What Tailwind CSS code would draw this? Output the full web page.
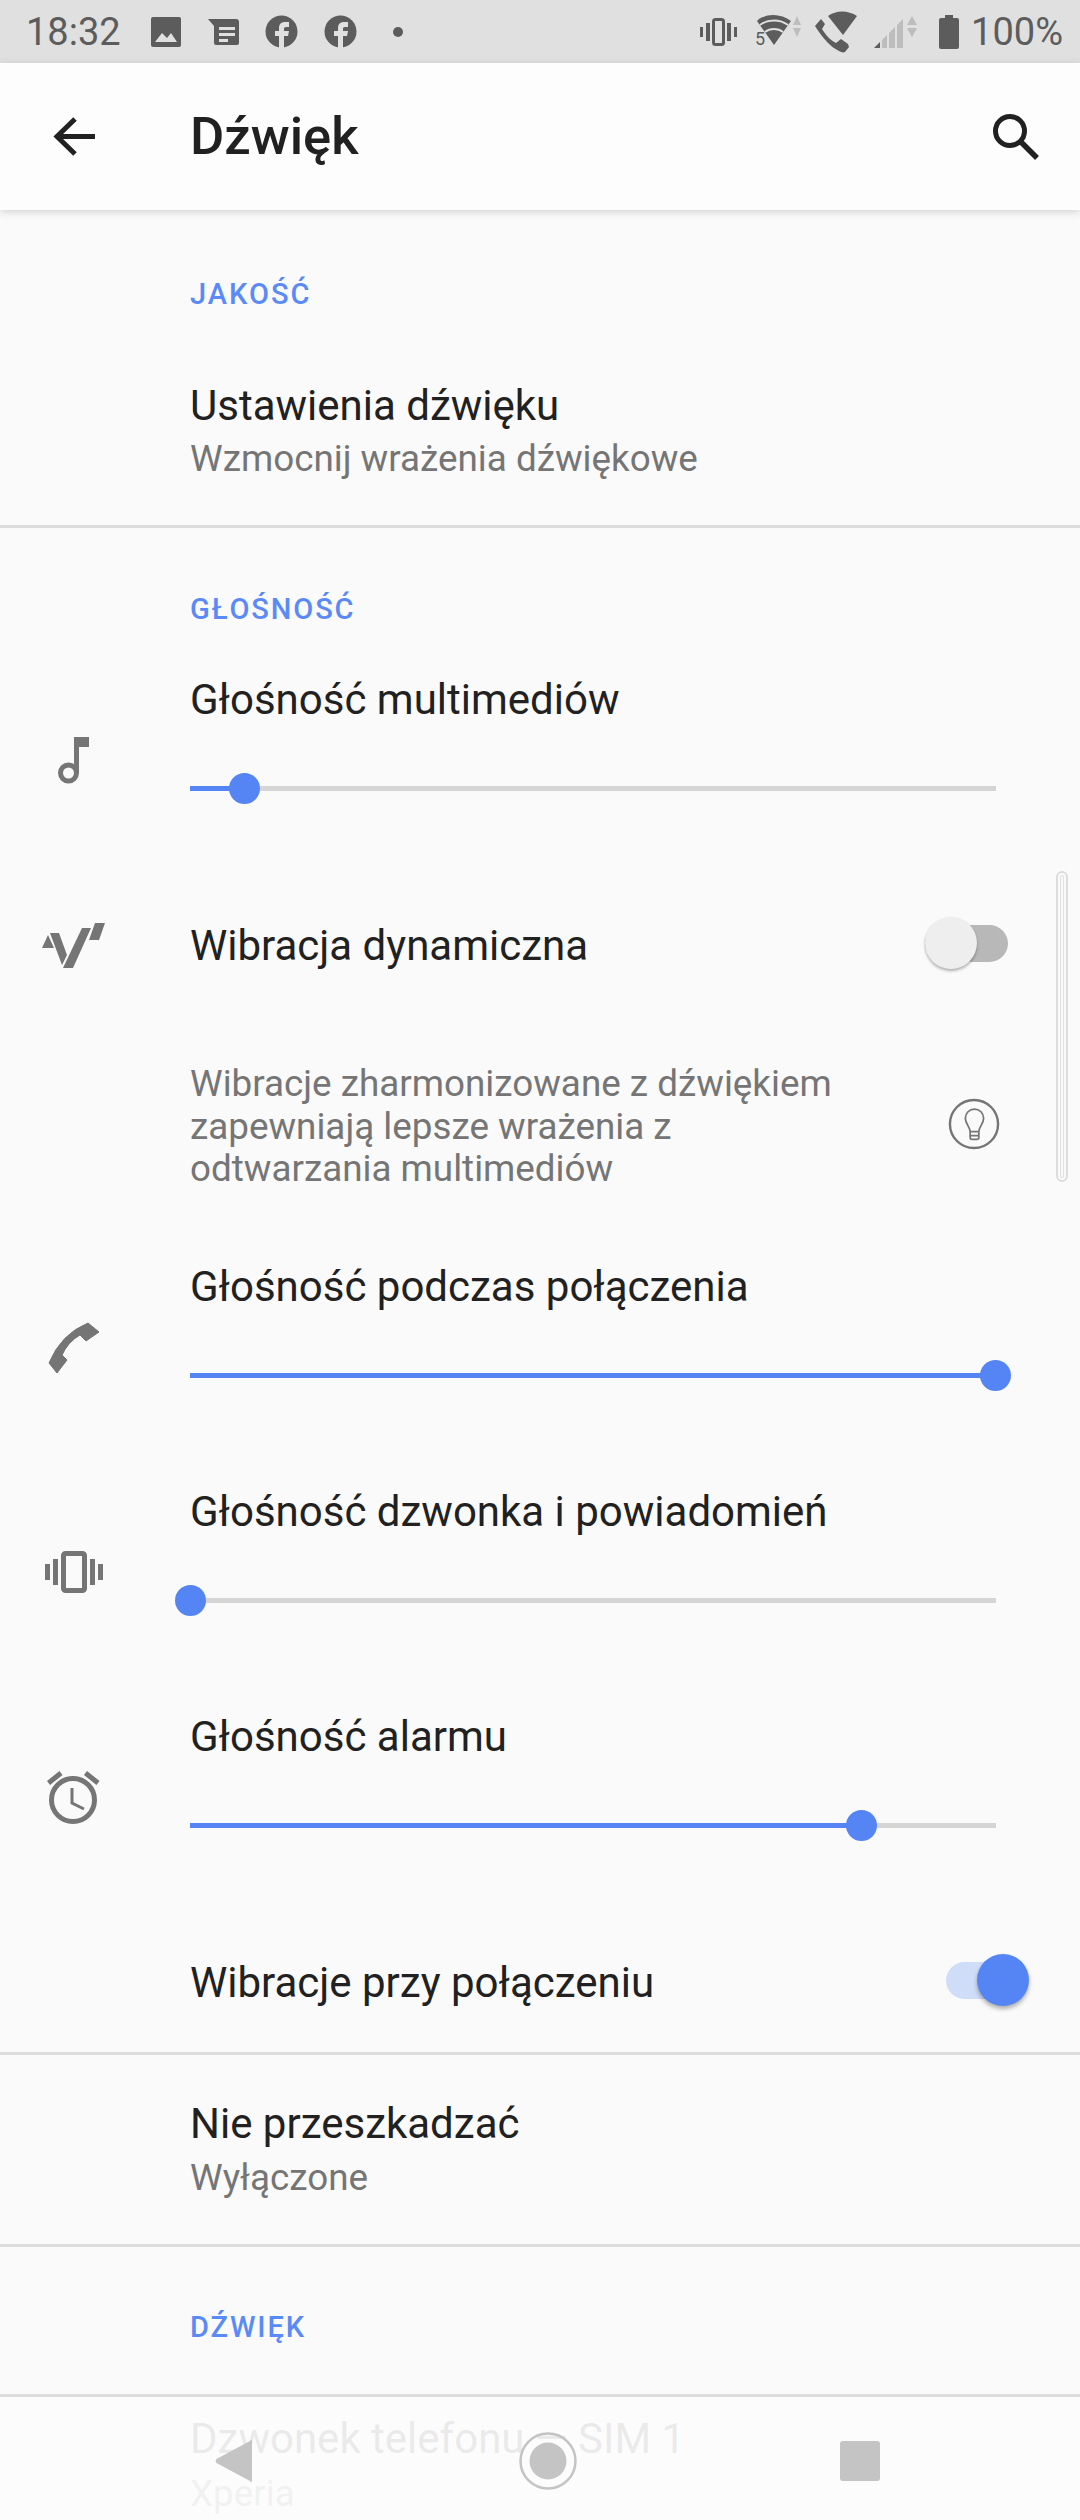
<!DOCTYPE html>
<html><head><meta charset="utf-8"><script src="https://cdn.jsdelivr.net/npm/@tailwindcss/browser@4"></script></head>
<body class="m-0">
<div class="relative w-[1080px] h-[2520px] overflow-hidden bg-[#fafafa] font-['Roboto',sans-serif] text-[#212121]">

<!-- status bar -->
<div class="h-[63px] bg-[#e0e0e0] flex items-center text-[#5c5c5c] relative">
  <span class="ml-[26px] text-[38px] leading-none w-[125px]">18:32</span>
  <svg width="30" height="30" viewBox="0 0 30 30"><rect width="30" height="30" rx="2" fill="#5c5c5c"/><path d="M4 25l7-9 5 5 4-5 6 9z" fill="#e0e0e0"/></svg>
  <svg class="ml-[27px]" width="32" height="28" viewBox="0 0 32 28"><path d="M0 1h28a3 3 0 0 1 3 3v21a2 2 0 0 1-2 2H8a2 2 0 0 1-2-2V8z" fill="#5c5c5c"/><path d="M11 9h16v3H11zM11 15h16v3H11zM11 21h9v3H11z" fill="#e0e0e0"/></svg>
  <svg class="ml-[25px]" width="33" height="33" viewBox="0 0 33 33"><circle cx="16.500" cy="16.500" r="16" fill="#5c5c5c"/><path d="M14 33V21h-4v-5h4v-3c0-4 2.500-6 6-6h4v5h-3c-1.500 0-2 .7-2 2v2h5l-1 5h-4v12z" fill="#e0e0e0"/></svg>
  <svg class="ml-[26px]" width="33" height="33" viewBox="0 0 33 33"><circle cx="16.500" cy="16.500" r="16" fill="#5c5c5c"/><path d="M14 33V21h-4v-5h4v-3c0-4 2.500-6 6-6h4v5h-3c-1.500 0-2 .7-2 2v2h5l-1 5h-4v12z" fill="#e0e0e0"/></svg>
  <span class="ml-[36px] w-[10px] h-[10px] rounded-full bg-[#5c5c5c]"></span>
  <div class="ml-auto flex items-center mr-[17px]">
    <svg width="37" height="28" viewBox="0 0 37 28"><path d="M0 9h3v10H0zM6 5h4v18H6zM27 5h4v18h-4zM34 9h3v10h-3z" fill="#5c5c5c"/><rect x="13.500" y="1.500" width="10" height="25" rx="2" fill="none" stroke="#5c5c5c" stroke-width="3"/></svg>
    <div class="relative ml-[18px] w-[48px] h-[36px]">
      <svg class="block" width="48" height="36" viewBox="0 0 48 36"><path d="M2 7C10-1 26-1 36 7L19 31z" fill="#5c5c5c"/><path d="M5 11c8-6 20-6 28 0M10 18c5-4 13-4 18 0" fill="none" stroke="#e0e0e0" stroke-width="1.800"/><path d="M42 2l4 9h-8zM42 23l4-9h-8z" fill="#bdbdbd"/></svg>
      <span class="absolute left-0 bottom-[2px] text-[18px] leading-none text-[#5c5c5c]">5</span>
    </div>
    <svg class="ml-[12px]" width="42" height="42" viewBox="0 0 42 42"><path d="M13 5c8-6 20-6 29 0L28 24z" fill="#5c5c5c"/><path d="M6 8l4 5-3 5 2 3c4 6 8 9 12 11l5-4 7 5 1 3-4 5c-2 1-4 0-6-1C16 36 9 29 0 15z" fill="#5c5c5c"/></svg>
    <svg class="ml-[17px]" width="44" height="34" viewBox="0 0 44 34"><path d="M0 33l6-6v6z" fill="#5c5c5c"/><path d="M8 25l5-5v13H8zM15 18l6-6v21h-6zM23 10l6-6v29h-6z" fill="#bdbdbd"/><path d="M38 1l5 9H33zM38 22l5-9H33z" fill="#bdbdbd"/></svg>
    <svg class="ml-[21px]" width="20" height="34" viewBox="0 0 20 34"><path d="M6 0h8v3h4a2 2 0 0 1 2 2v27a2 2 0 0 1-2 2H2a2 2 0 0 1-2-2V5a2 2 0 0 1 2-2h4z" fill="#5c5c5c"/></svg>
    <span class="ml-[12px] text-[38px] leading-none">100%</span>
  </div>
</div>

<!-- toolbar -->
<div class="h-[147px] bg-[#fdfdfd] shadow-[0_2px_8px_rgba(0,0,0,0.16)] relative z-10 flex items-center">
  <svg class="ml-[53px]" width="42" height="42" viewBox="0 0 42 42"><path d="M42 20.500H6M22 3L4 20.500 22 38" fill="none" stroke="#212121" stroke-width="5"/></svg>
  <span class="ml-[95px] text-[52.500px] leading-none font-medium">Dźwięk</span>
  <svg class="ml-auto mr-[41px]" width="46" height="46" viewBox="0 0 46 46"><circle cx="17" cy="17" r="14.500" fill="none" stroke="#212121" stroke-width="5"/><path d="M27 27l17 17" stroke="#212121" stroke-width="5.500"/></svg>
</div>

<!-- JAKOŚĆ -->
<div class="h-[318px] border-b-[3px] border-[#dcdcdc] pl-[190px]">
  <div class="pt-[69px] h-[165px] text-[29px] leading-[30px] font-medium tracking-[2px] text-[#5a8af7]">JAKOŚĆ</div>
  <div class="text-[42px] leading-[50px] pt-[6px]">Ustawienia dźwięku</div>
  <div class="text-[36.800px] leading-[44px] mt-[6px] text-[#757575]">Wzmocnij wrażenia dźwiękowe</div>
</div>

<!-- GŁOŚNOŚĆ -->
<div class="h-[1527px] border-b-[3px] border-[#dcdcdc]">
  <div class="pl-[190px] pt-[66px] text-[29px] leading-[30px] font-medium tracking-[1.9px] text-[#5a8af7]">GŁOŚNOŚĆ</div>

  <!-- multimedia -->
  <div class="h-[200px] mt-[50px] flex">
    <div class="w-[190px] pl-[58px] pt-[63px]">
      <svg width="31" height="47" viewBox="0 0 31 47"><path d="M16 0h15v10H21v26h-5z" fill="#757575"/><circle cx="10.500" cy="36" r="8" fill="none" stroke="#757575" stroke-width="5"/></svg>
    </div>
    <div class="w-[806px]">
      <div class="text-[42px] leading-[50px] pt-[1px]">Głośność multimediów</div>
      <div class="relative h-[5px] mt-[61px] bg-[#d5d5d5]"><div class="h-full w-[55px] bg-[#5585f5]"></div><span class="absolute left-[39px] top-[-13px] w-[31px] h-[31px] rounded-full bg-[#5585f5]"></span></div>
    </div>
  </div>

  <!-- dynamic vibration -->
  <div class="h-[93px] mt-[25px] flex items-center relative">
    <div class="w-[190px] pl-[42px]">
      <svg class="block" width="63" height="45" viewBox="0 0 63 45"><path d="M0 25L6 12l6 13zM8 10h9l8 22-5 10zM40 5h9L31 45H21zM53 0h10l-6 17H47z" fill="#757575"/></svg>
    </div>
    <span class="text-[42px] leading-[50px]">Wibracja dynamiczna</span>
    <div class="absolute left-[925px] top-[26px] w-[83px] h-[37px] rounded-full bg-[#b8b8b8]"></div>
    <div class="absolute left-[925px] top-[18px] w-[52px] h-[52px] rounded-full bg-[#eeeeee] shadow-[0_2px_3px_rgba(0,0,0,0.3)]"></div>
  </div>

  <!-- description -->
  <div class="h-[269px] pl-[190px] relative">
    <div class="pt-[71px] text-[36.800px] leading-[42.500px] text-[#757575]">Wibracje zharmonizowane z dźwiękiem<br>zapewniają lepsze wrażenia z<br>odtwarzania multimediów</div>
    <svg class="absolute left-[948px] top-[106px]" width="52" height="52" viewBox="0 0 54 54"><circle cx="27" cy="27" r="25" fill="none" stroke="#757575" stroke-width="2.500"/><path d="M23 35c0-5-5-8-5-14a9.500 9.500 0 0 1 19 0c0 6-5 9-5 14zM23 35v6a2 2 0 0 0 2 2h5a2 2 0 0 0 2-2v-6M23 39h9" fill="none" stroke="#757575" stroke-width="1.800"/></svg>
  </div>

  <!-- call -->
  <div class="h-[225px] flex">
    <div class="w-[190px] pl-[48px] pt-[61px]">
      <svg width="52" height="52" viewBox="0 0 52 52"><path d="M40 1L51 10 38 19 32 13Q20 20 14 33L19 38 9 51 1 41Q13 12 40 1z" fill="#757575" stroke="#757575" stroke-width="1" stroke-linejoin="round"/></svg>
    </div>
    <div class="w-[806px]">
      <div class="text-[42px] leading-[50px] pt-[1px]">Głośność podczas połączenia</div>
      <div class="relative h-[5px] mt-[61px] bg-[#5585f5]"><span class="absolute left-[790px] top-[-13px] w-[31px] h-[31px] rounded-full bg-[#5585f5]"></span></div>
    </div>
  </div>

  <!-- ring -->
  <div class="h-[225px] flex">
    <div class="w-[190px] pl-[45px] pt-[65px]">
      <svg width="58" height="42" viewBox="0 0 58 42"><path d="M0 13h5v16H0zM8 8h5v26H8zM45 8h5v26h-5zM53 13h5v16h-5z" fill="#757575"/><rect x="18.500" y="2.500" width="21" height="37" rx="2" fill="none" stroke="#757575" stroke-width="5"/></svg>
    </div>
    <div class="w-[806px]">
      <div class="text-[42px] leading-[50px] pt-[1px]">Głośność dzwonka i powiadomień</div>
      <div class="relative h-[5px] mt-[61px] bg-[#d5d5d5]"><span class="absolute left-[-15px] top-[-13px] w-[31px] h-[31px] rounded-full bg-[#5585f5]"></span></div>
    </div>
  </div>

  <!-- alarm -->
  <div class="h-[225px] flex">
    <div class="w-[190px] pl-[47px] pt-[60px]">
      <svg width="53" height="53" viewBox="0 0 53 53"><circle cx="26" cy="29" r="21.500" fill="none" stroke="#757575" stroke-width="5"/><path d="M1.500 12L14 2M51 12L38.500 2" stroke="#757575" stroke-width="5"/><path d="M25 17v15l12 6" fill="none" stroke="#757575" stroke-width="3"/></svg>
    </div>
    <div class="w-[806px]">
      <div class="text-[42px] leading-[50px] pt-[1px]">Głośność alarmu</div>
      <div class="relative h-[5px] mt-[61px] bg-[#d5d5d5]"><div class="h-full w-[672px] bg-[#5585f5]"></div><span class="absolute left-[656px] top-[-13px] w-[31px] h-[31px] rounded-full bg-[#5585f5]"></span></div>
    </div>
  </div>

  <!-- Wibracje -->
  <div class="h-[93px] flex items-center pl-[190px] relative">
    <span class="text-[42px] leading-[50px]">Wibracje przy połączeniu</span>
    <div class="absolute left-[946px] top-[26px] w-[70px] h-[37px] rounded-full bg-[#cfddf9]"></div>
    <div class="absolute left-[977px] top-[18px] w-[52px] h-[52px] rounded-full bg-[#5585f5] shadow-[0_3px_4px_rgba(0,0,0,0.3)]"></div>
  </div>
</div>

<!-- Nie przeszkadzac -->
<div class="h-[192px] border-b-[3px] border-[#dcdcdc] pl-[190px] pt-[44px]">
  <div class="text-[42px] leading-[50px]">Nie przeszkadzać</div>
  <div class="text-[36.800px] leading-[44px] mt-[7px] text-[#757575]">Wyłączone</div>
</div>

<!-- DZWIEK -->
<div class="h-[150px] border-b-[3px] border-[#dcdcdc] pl-[190px] pt-[65px]">
  <div class="text-[29px] leading-[30px] font-medium tracking-[1.9px] text-[#5a8af7]">DŹWIĘK</div>
</div>

<div class="pl-[190px] pt-[17px]">
  <div class="text-[42px] leading-[50px]">Dzwonek telefonu — SIM 1</div>
  <div class="text-[36.800px] leading-[44px] mt-[8px] text-[#757575]">Xperia</div>
</div>

<!-- nav bar overlay -->
<div class="absolute left-0 right-0 bottom-0 h-[123px] bg-[#fcfcfc]/92">
  <svg class="absolute left-[215px] top-[43px]" width="37" height="42" viewBox="0 0 37 42"><path d="M37 1v40a1 1 0 0 1-2 0L1.500 23a3 3 0 0 1 0-4L35 1a1 1 0 0 1 2 0z" fill="#c4c4c4"/></svg>
  <svg class="absolute left-[519px] top-[35px]" width="58" height="58" viewBox="0 0 58 58"><circle cx="29" cy="29" r="27.500" fill="none" stroke="#c4c4c4" stroke-width="2.500"/><circle cx="29" cy="29" r="18.500" fill="#c4c4c4"/></svg>
  <div class="absolute left-[840px] top-[44px] w-[40px] h-[40px] rounded-[3px] bg-[#c4c4c4]"></div>
</div>

<!-- scrollbar -->
<div class="absolute left-[1056px] top-[871px] w-[12px] h-[311px] rounded-full border-2 border-[#dddddd] bg-[#fafafa] p-[2px]"><div class="w-full h-full rounded-full border border-[#e0e0e0]"></div></div>
</div>
</body></html>
